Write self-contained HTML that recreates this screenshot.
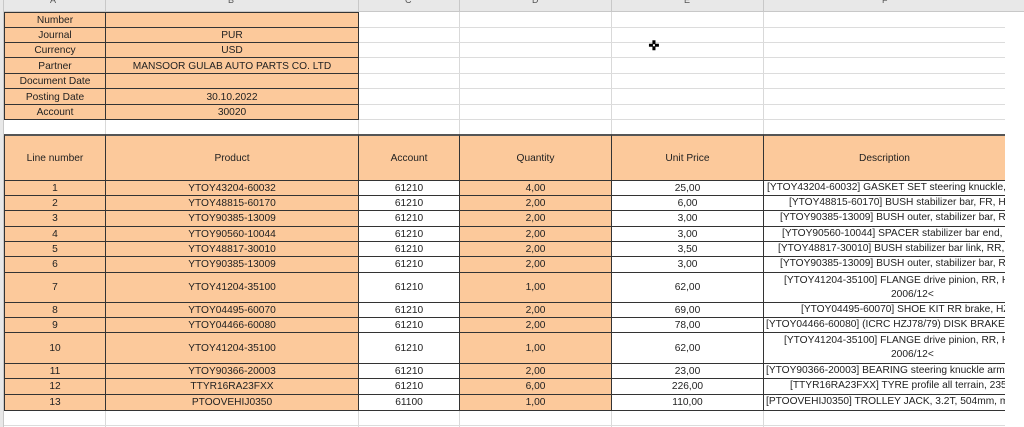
<!DOCTYPE html>
<html><head><meta charset="utf-8"><style>
body{margin:0;width:1024px;height:427px;overflow:hidden;background:#fff;font-family:"Liberation Sans",sans-serif;font-size:10.2px;color:#222;position:relative}
div{position:absolute;box-sizing:border-box}
.gv{width:1px;background:#d9d9d9;top:12px;height:415px}
.gh{height:1px;background:#dcdcdc;left:4px;width:1001px}
.c{display:flex;align-items:center;justify-content:center;border-left:1px solid #333;border-top:1px solid #333;white-space:nowrap}
.o{background:#fcc99b}
.w{background:#fff}
.d{white-space:nowrap;line-height:12px}
.ln{background:#333}
</style></head><body>
<div style="left:0;top:0;width:1024px;height:12px;background:#e8e8e8;border-bottom:1px solid #c8c8c8"></div>
<div style="left:0;top:0;width:4px;height:427px;background:#e8e8e8;border-right:1px solid #c8c8c8"></div>
<div style="left:50px;top:-5px;font-size:9px;color:#555">A</div>
<div style="left:228px;top:-5px;font-size:9px;color:#555">B</div>
<div style="left:405px;top:-5px;font-size:9px;color:#555">C</div>
<div style="left:532px;top:-5px;font-size:9px;color:#555">D</div>
<div style="left:684px;top:-5px;font-size:9px;color:#555">E</div>
<div style="left:882px;top:-5px;font-size:9px;color:#555">F</div>
<div style="left:105px;top:0;width:1px;height:12px;background:#c8c8c8"></div>
<div style="left:358px;top:0;width:1px;height:12px;background:#c8c8c8"></div>
<div style="left:459px;top:0;width:1px;height:12px;background:#c8c8c8"></div>
<div style="left:611px;top:0;width:1px;height:12px;background:#c8c8c8"></div>
<div style="left:763px;top:0;width:1px;height:12px;background:#c8c8c8"></div>
<!-- gridlines -->
<div class="gv" style="left:105px"></div><div class="gv" style="left:358px"></div><div class="gv" style="left:459px"></div><div class="gv" style="left:611px"></div><div class="gv" style="left:763px"></div>
<div class="gh" style="top:27px"></div><div class="gh" style="top:42px"></div><div class="gh" style="top:57px"></div><div class="gh" style="top:73px"></div><div class="gh" style="top:88px"></div><div class="gh" style="top:104px"></div><div class="gh" style="top:119px"></div><div class="gh" style="top:134px"></div><div class="gh" style="top:425px"></div>
<!-- top block -->
<div class="c o" style="left:4px;top:12px;width:101px;height:16px">Number</div><div class="c o" style="left:105px;top:12px;width:253px;height:16px"></div>
<div class="c o" style="left:4px;top:27px;width:101px;height:16px">Journal</div><div class="c o" style="left:105px;top:27px;width:253px;height:16px">PUR</div>
<div class="c o" style="left:4px;top:42px;width:101px;height:16px">Currency</div><div class="c o" style="left:105px;top:42px;width:253px;height:16px">USD</div>
<div class="c o" style="left:4px;top:57px;width:101px;height:17px">Partner</div><div class="c o" style="left:105px;top:57px;width:253px;height:17px">MANSOOR GULAB AUTO PARTS CO. LTD</div>
<div class="c o" style="left:4px;top:73px;width:101px;height:16px">Document Date</div><div class="c o" style="left:105px;top:73px;width:253px;height:16px"></div>
<div class="c o" style="left:4px;top:88px;width:101px;height:17px">Posting Date</div><div class="c o" style="left:105px;top:88px;width:253px;height:17px">30.10.2022</div>
<div class="c o" style="left:4px;top:104px;width:101px;height:16px">Account</div><div class="c o" style="left:105px;top:104px;width:253px;height:16px">30020</div>
<div class="ln" style="left:4px;top:119px;width:355px;height:1px"></div>
<div class="ln" style="left:358px;top:12px;width:1px;height:108px"></div>
<!-- header -->
<div class="c o" style="left:4px;top:134px;width:101px;height:46px;border-top:2px solid #555">Line number</div>
<div class="c o" style="left:105px;top:134px;width:253px;height:46px;border-top:2px solid #555">Product</div>
<div class="c o" style="left:358px;top:134px;width:101px;height:46px;border-top:2px solid #555">Account</div>
<div class="c o" style="left:459px;top:134px;width:152px;height:46px;border-top:2px solid #555">Quantity</div>
<div class="c o" style="left:611px;top:134px;width:152px;height:46px;border-top:2px solid #555">Unit Price</div>
<div class="c o" style="left:763px;top:134px;width:242px;height:46px;border-top:2px solid #555">Description</div>
<div id="rows"></div>
<script>
var R=[
[180,195,"1","YTOY43204-60032","61210","4,00","25,00","[YTOY43204-60032] GASKET SET steering knuckle, FR",767],
[195,210,"2","YTOY48815-60170","61210","2,00","6,00","[YTOY48815-60170] BUSH stabilizer bar, FR, HZJ",789],
[210,226,"3","YTOY90385-13009","61210","2,00","3,00","[YTOY90385-13009] BUSH outer, stabilizer bar, RR",780],
[226,241,"4","YTOY90560-10044","61210","2,00","3,00","[YTOY90560-10044] SPACER stabilizer bar end, FR",782],
[241,256,"5","YTOY48817-30010","61210","2,00","3,50","[YTOY48817-30010] BUSH stabilizer bar link, RR,",778],
[256,272,"6","YTOY90385-13009","61210","2,00","3,00","[YTOY90385-13009] BUSH outer, stabilizer bar, RR",780],
[272,302,"7","YTOY41204-35100","61210","1,00","62,00","[YTOY41204-35100] FLANGE drive pinion, RR, HZJ",784,1],
[302,317,"8","YTOY04495-60070","61210","2,00","69,00","[YTOY04495-60070] SHOE KIT RR brake, HZJ78",801],
[317,332,"9","YTOY04466-60080","61210","2,00","78,00","[YTOY04466-60080] (ICRC HZJ78/79) DISK BRAKE pad",766],
[332,363,"10","YTOY41204-35100","61210","1,00","62,00","[YTOY41204-35100] FLANGE drive pinion, RR, HZJ",784,1],
[363,378,"11","YTOY90366-20003","61210","2,00","23,00","[YTOY90366-20003] BEARING steering knuckle arm",766],
[378,394,"12","TTYR16RA23FXX","61210","6,00","226,00","[TTYR16RA23FXX] TYRE profile all terrain, 235/85",790],
[394,410,"13","PTOOVEHIJ0350","61100","1,00","110,00","[PTOOVEHIJ0350] TROLLEY JACK, 3.2T, 504mm, max",766]];
var h="";
R.forEach(function(r){var t=r[0],H=r[1]-r[0];
h+='<div class="c o" style="left:4px;top:'+t+'px;width:101px;height:'+H+'px">'+r[2]+'</div>';
h+='<div class="c o" style="left:105px;top:'+t+'px;width:253px;height:'+H+'px">'+r[3]+'</div>';
h+='<div class="c w" style="left:358px;top:'+t+'px;width:101px;height:'+H+'px">'+r[4]+'</div>';
h+='<div class="c o" style="left:459px;top:'+t+'px;width:152px;height:'+H+'px">'+r[5]+'</div>';
h+='<div class="c w" style="left:611px;top:'+t+'px;width:152px;height:'+H+'px">'+r[6]+'</div>';
h+='<div class="c w" style="left:763px;top:'+t+'px;width:242px;height:'+H+'px;overflow:hidden;display:block">';
if(r[9]){h+='<div class="d" style="left:'+(r[8]-764)+'px;top:2px">'+r[7]+'</div><div class="d" style="left:127px;top:16px">2006/12&lt;</div>';}
else{h+='<div class="d" style="left:'+(r[8]-764)+'px;top:'+((H-14)/2)+'px">'+r[7]+'</div>';}
h+='</div>';});
document.getElementById("rows").innerHTML=h;
</script>
<div class="ln" style="left:4px;top:410px;width:1001px;height:1px"></div>
<div style="left:1005px;top:12px;width:19px;height:415px;background:#fff"></div>
<div style="left:648px;top:40px;width:12px;height:12px;font-size:13px;line-height:12px;font-weight:bold;color:#000;text-align:center">✜</div>
</body></html>
